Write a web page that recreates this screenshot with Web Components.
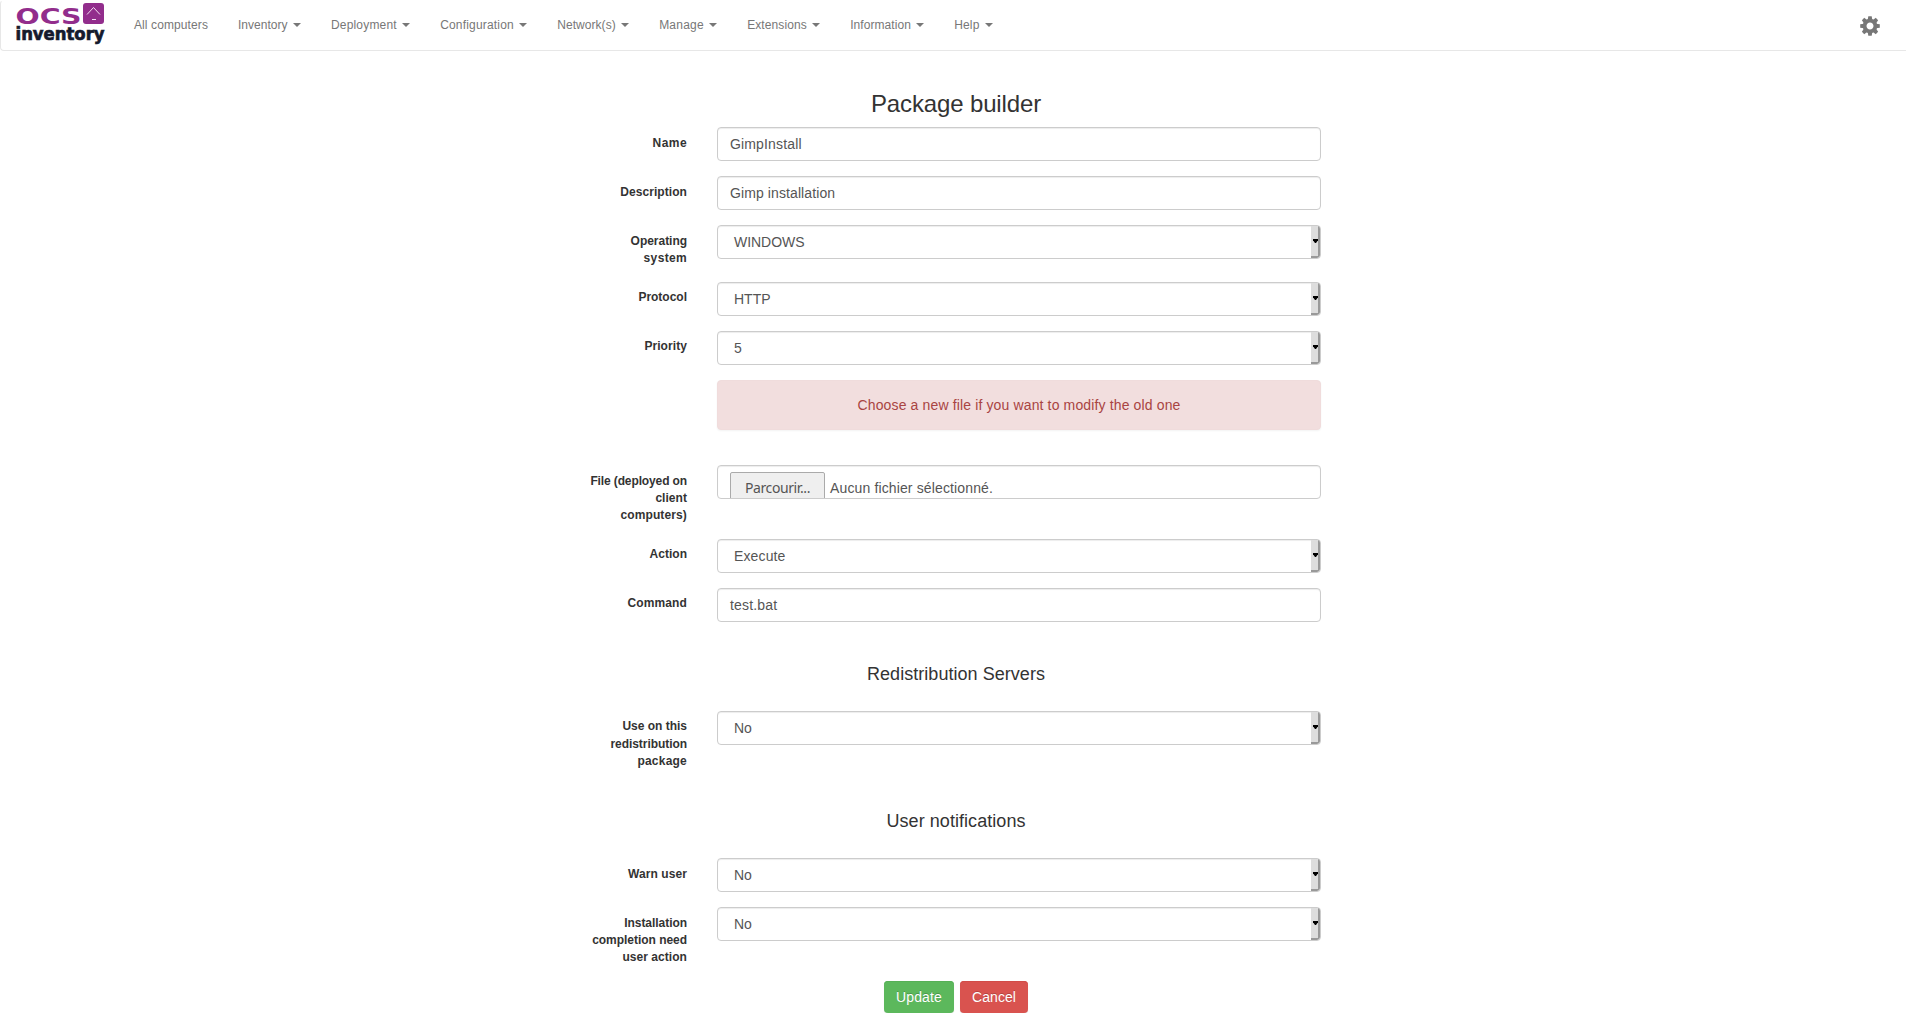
<!DOCTYPE html>
<html lang="en">
<head>
<meta charset="utf-8">
<title>Package builder</title>
<style>
html{overflow:hidden}
body{margin:0;background:#fff;color:#333;font:14px/20px "Liberation Sans",Arial,sans-serif}
</style>
</head>
<body>
<ocs-navbar>
  <nav-item plain fit="74">All computers</nav-item>
  <nav-item fit="49.6">Inventory</nav-item>
  <nav-item fit="65.9">Deployment</nav-item>
  <nav-item fit="73.7">Configuration</nav-item>
  <nav-item fit="58.6">Network(s)</nav-item>
  <nav-item fit="44.7">Manage</nav-item>
  <nav-item fit="59.7">Extensions</nav-item>
  <nav-item fit="60.7">Information</nav-item>
  <nav-item fit="25.3">Help</nav-item>
</ocs-navbar>
<package-form>
  <form-title fit="170" style="--size:24px;--lh:26px;--top:40px;--bottom:10px">Package builder</form-title>
  <form-row label="Name=34.4" style="--h:49px"><text-field fit="71.7">GimpInstall</text-field></form-row>
  <form-row label="Description=66.8" style="--h:49px"><text-field fit="105.2">Gimp installation</text-field></form-row>
  <form-row label="Operating=56.4|system=43.4" style="--h:57px"><select-field fit="70.5">WINDOWS</select-field></form-row>
  <form-row label="Protocol=48.6" style="--h:49px;--lt:7px"><select-field>HTTP</select-field></form-row>
  <form-row label="Priority=42.6" style="--h:49px;--lt:7px"><select-field>5</select-field></form-row>
  <form-row style="--h:85px"><alert-box fit="323">Choose a new file if you want to modify the old one</alert-box></form-row>
  <form-row label="File (deployed on=96.600|client=31.600|computers)=66.600" style="--h:74px"><file-field fit="163" button="Parcourir...">Aucun fichier sélectionné.</file-field></form-row>
  <form-row label="Action=37.4" style="--h:49px;--lt:7px"><select-field fit="51.5">Execute</select-field></form-row>
  <form-row label="Command=59.4" style="--h:49px;--lt:7px"><text-field fit="47.2">test.bat</text-field></form-row>
  <form-title fit="178" style="--size:18px;--lh:20px;--top:27px;--bottom:27px">Redistribution Servers</form-title>
  <form-row label="Use on this=64.6|redistribution=76.6|package=49.6" style="--h:73px;--lt:7.4px"><select-field>No</select-field></form-row>
  <form-title fit="139" style="--size:18px;--lh:20px;--top:27px;--bottom:27px">User notifications</form-title>
  <form-row label="Warn user=59" style="--h:49px"><select-field>No</select-field></form-row>
  <form-row label="Installation=62.8|completion need=94.8|user action=64.600" style="--h:74px"><select-field>No</select-field></form-row>
  <button-bar>
    <action-button fit="46" style="--bg:#5cb85c;--edge:#56b056">Update</action-button>
    <action-button fit="44" style="--bg:#d9534f;--edge:#d14c48">Cancel</action-button>
  </button-bar>
</package-form>
<script>
/* Spreads the letters of a node so that its text takes the given width. */
function fitText(node, width, target = node) {
  const range = document.createRange();
  range.selectNodeContents(node);
  const extra = width - range.getBoundingClientRect().width;
  target.style.letterSpacing = (extra / node.textContent.length).toFixed(3) + "px";
}
function define(name, render) {
  customElements.define(name, class extends HTMLElement {
    constructor() { super(); this.attachShadow({ mode: "open" }); }
    connectedCallback() {
      this.shadowRoot.innerHTML = render(this);
      for (const part of this.shadowRoot.querySelectorAll("[data-fit]")) fitText(part, +part.dataset.fit);
    }
  });
}

define("ocs-logo", () => `
<style>:host{display:block;width:90px;height:49px}svg{display:block;overflow:visible}</style>
<svg width="90" height="49" viewBox="15 0 90 49">
  <text x="15.500" y="24" font-family="DejaVu Sans" font-weight="bold" font-size="21.5" fill="#922d8c" textLength="66" lengthAdjust="spacingAndGlyphs">OCS</text>
  <rect x="83" y="3" width="21" height="21" rx="3" fill="#922d8c"/>
  <path d="M87 14.500 93.500 7.500 100 14.500M92 19.500h4" fill="none" stroke="#f3dff2" stroke-width="1"/>
  <text x="15.500" y="39.500" font-family="DejaVu Sans" font-weight="bold" font-size="17.5" fill="#151a2d" stroke="#151a2d" stroke-width=".7" textLength="89" lengthAdjust="spacingAndGlyphs">inventory</text>
</svg>`);

define("nav-item", el => `
<style>
:host{display:flex;align-items:center;padding:15px;font-size:12px;line-height:20px;color:#777;white-space:pre}
i{width:0;height:0;margin-left:5.33px;border:4px solid transparent;border-top-color:#777;border-bottom:0}
</style><slot></slot>${el.hasAttribute("plain") ? "" : "<i></i>"}`);

define("gear-icon", () => {
  let teeth = "";
  for (let a = 0; a < 360; a += 45) teeth += `<path d="M-2.300-6-1.700-9.800H1.700L2.300-6Z" transform="rotate(${a})"/>`;
  return `<style>:host{display:block}svg{display:block}</style>
<svg width="20" height="20" viewBox="-10 -10 20 20" fill="#777">${teeth}<circle r="5.400" fill="none" stroke="#777" stroke-width="3.800"/></svg>`;
});

define("ocs-navbar", () => `
<style>
:host{display:flex;box-sizing:border-box;height:51px;border:1px solid #e7e7e7;border-top-color:#fff;border-right:0;border-radius:4px 0 0 4px;background:#fff}
ocs-logo{margin:-1px 14px 0 14px}
nav{display:flex;flex:1;margin-top:-1px}
gear-icon{margin:15px 26px 0 0}
</style>
<ocs-logo></ocs-logo><nav><slot></slot></nav><gear-icon></gear-icon>`);

define("package-form", () => `
<style>:host{display:block;box-sizing:border-box;width:750px;margin-left:581px}</style><slot></slot>`);

define("form-title", () => `
<style>:host{display:block;text-align:center;font-size:var(--size);line-height:var(--lh);padding:var(--top) 0 var(--bottom)}</style><slot></slot>`);

define("form-row", el => {
  const lines = (el.getAttribute("label") || "").split("|").filter(Boolean).map(line => {
    const [text, width] = line.split("=");
    return `<span data-fit="${width}">${text}</span>`;
  });
  return `
<style>
:host{display:flex;box-sizing:border-box;height:var(--h);padding:0 10px 0 8px;gap:30px}
label{width:98px;padding-top:calc(var(--lt,8px));text-align:right;font-size:12px;font-weight:bold;line-height:17.14px;white-space:nowrap}
div{flex:1}
</style><label>${lines.join("<br>")}</label><div><slot></slot></div>`;
});

const box = `box-sizing:border-box;height:34px;border:1px solid #ccc;border-radius:4px;background:#fff;box-shadow:inset 0 1px 1px rgba(0,0,0,.075);color:#555`;

define("text-field", () => `
<style>:host{display:block;${box};padding:6px 12px}</style><slot></slot>`);

define("select-field", () => `
<style>
:host{display:flex;${box};overflow:hidden}
span{flex:1;padding:6px 16px}
b{box-sizing:border-box;width:9px;height:32px;background:#ddd;border-right:2px solid #999;border-bottom:2px solid #999;border-radius:0 0 3px 0;display:flex;justify-content:center;align-items:center}
svg{flex:none;display:block;margin:0 -1px 0 0}
</style><span><slot></slot></span><b><svg width="5" height="4"><path d="M0 0H5V1.300L3 4H2L0 1.300Z"/></svg></b>`);

define("file-field", el => `
<style>
:host{display:flex;${box};overflow:hidden;padding:6px 12px 0}
button{flex:none;box-sizing:border-box;width:95px;height:34px;margin:0 5px 0 0;padding:0 0 2px;border:1px solid #aaa;border-radius:2px;background:#efefef;color:#555;font:14px/18px "Noto Sans",sans-serif}
p{margin:6px 0 0}
</style><button><span data-fit="65">${el.getAttribute("button")}</span></button><p><slot></slot></p>`);

define("alert-box", () => `
<style>:host{display:block;box-sizing:border-box;height:50px;padding:14px;border:1px solid #f0dcdc;border-radius:4px;background:#f2dede;color:#a94442;text-align:center;box-shadow:0 1px 2px rgba(0,0,0,.05)}</style><slot></slot>`);

define("button-bar", () => `
<style>:host{display:flex;justify-content:center;gap:6px}</style><slot></slot>`);

define("action-button", () => `
<style>:host{display:block;box-sizing:border-box;height:32px;padding:6px 12px;border-radius:4px;background:var(--bg);color:#fff;text-shadow:0 -1px 0 rgba(0,0,0,.2);box-shadow:inset 0 1px 0 var(--edge),0 1px 1px rgba(0,0,0,.1)}</style><slot></slot>`);

for (const el of document.querySelectorAll("[fit]")) fitText(el, +el.getAttribute("fit"));
</script>
</body>
</html>
